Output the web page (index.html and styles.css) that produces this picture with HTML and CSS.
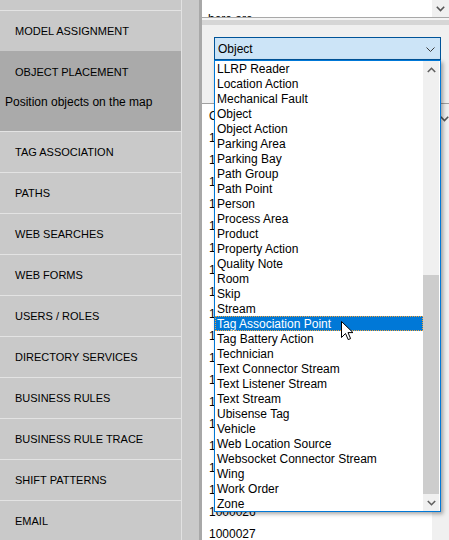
FILE: index.html
```html
<!DOCTYPE html>
<html>
<head>
<meta charset="utf-8">
<link rel="stylesheet" href="styles.css">
</head>
<body>
<div class="app">
  <nav class="sidebar">
    <div class="nav-list">
      <div class="nav-item">FLOOR PLANS</div>
      <div class="nav-item">MODEL ASSIGNMENT</div>
      <div class="nav-item active">
        <div class="nav-title">OBJECT PLACEMENT</div>
        <div class="nav-sub">Position objects on the map</div>
      </div>
      <div class="nav-item">TAG ASSOCIATION</div>
      <div class="nav-item">PATHS</div>
      <div class="nav-item">WEB SEARCHES</div>
      <div class="nav-item">WEB FORMS</div>
      <div class="nav-item">USERS / ROLES</div>
      <div class="nav-item">DIRECTORY SERVICES</div>
      <div class="nav-item">BUSINESS RULES</div>
      <div class="nav-item">BUSINESS RULE TRACE</div>
      <div class="nav-item">SHIFT PATTERNS</div>
      <div class="nav-item">EMAIL</div>
    </div>
  </nav>
  <div class="splitter"></div>
  <main class="main">
    <div class="topbox">
      <span class="topbox-text">here are</span>
      <div class="topbox-btn">
        <svg width="9" height="6" viewBox="0 0 9 6"><path d="M0.8 0.8 L4.5 4.5 L8.2 0.8" stroke="#555" stroke-width="1.6" fill="none"/></svg>
      </div>
    </div>
    <div class="gap"></div>
    <div class="band"></div>
    <div class="panel">
      <div class="combo">
        <div class="select">
          <span>Object</span>
          <svg width="9" height="5" viewBox="0 0 9 5"><path d="M0.5 0.5 L4.5 4.5 L8.5 0.5" stroke="#3c3c3c" stroke-width="1" fill="none"/></svg>
        </div>
        <div class="dropdown">
          <div class="options">
            <div class="opt">LLRP Reader</div>
            <div class="opt">Location Action</div>
            <div class="opt">Mechanical Fault</div>
            <div class="opt">Object</div>
            <div class="opt">Object Action</div>
            <div class="opt">Parking Area</div>
            <div class="opt">Parking Bay</div>
            <div class="opt">Path Group</div>
            <div class="opt">Path Point</div>
            <div class="opt">Person</div>
            <div class="opt">Process Area</div>
            <div class="opt">Product</div>
            <div class="opt">Property Action</div>
            <div class="opt">Quality Note</div>
            <div class="opt">Room</div>
            <div class="opt">Skip</div>
            <div class="opt">Stream</div>
            <div class="opt sel">Tag Association Point</div>
            <div class="opt">Tag Battery Action</div>
            <div class="opt">Technician</div>
            <div class="opt">Text Connector Stream</div>
            <div class="opt">Text Listener Stream</div>
            <div class="opt">Text Stream</div>
            <div class="opt">Ubisense Tag</div>
            <div class="opt">Vehicle</div>
            <div class="opt">Web Location Source</div>
            <div class="opt">Websocket Connector Stream</div>
            <div class="opt">Wing</div>
            <div class="opt">Work Order</div>
            <div class="opt">Zone</div>
          </div>
          <div class="vscroll">
            <div class="sb-btn"><svg width="9" height="6" viewBox="0 0 9 6"><path d="M0.8 5 L4.5 1.3 L8.2 5" stroke="#606060" stroke-width="1.6" fill="none"/></svg></div>
            <div class="sb-track"><div class="sb-thumb"></div></div>
            <div class="sb-btn"><svg width="9" height="6" viewBox="0 0 9 6"><path d="M0.8 1 L4.5 4.7 L8.2 1" stroke="#606060" stroke-width="1.6" fill="none"/></svg></div>
          </div>
        </div>
      </div>
    </div>
    <div class="grid">
      <div class="grid-rows">
        <div class="row">Object ID</div>
        <div class="row">1000009</div>
        <div class="row">1000010</div>
        <div class="row">1000011</div>
        <div class="row">1000012</div>
        <div class="row">1000013</div>
        <div class="row">1000014</div>
        <div class="row">1000015</div>
        <div class="row">1000016</div>
        <div class="row">1000017</div>
        <div class="row">1000018</div>
        <div class="row">1000019</div>
        <div class="row">1000020</div>
        <div class="row">1000021</div>
        <div class="row">1000022</div>
        <div class="row">1000023</div>
        <div class="row">1000024</div>
        <div class="row">1000025</div>
        <div class="row">1000026</div>
        <div class="row">1000027</div>
      </div>
      <div class="grid-scroll">
        <svg width="9" height="6" viewBox="0 0 9 6"><path d="M0.8 0.8 L4.5 4.5 L8.2 0.8" stroke="#555" stroke-width="1.6" fill="none"/></svg>
      </div>
    </div>
  </main>
</div>
<svg class="cursor" width="13" height="20" viewBox="0 0 13 20"><path d="M0.5 0.5 L0.5 16.5 L4.5 12.5 L7.2 18.6 L9.6 17.6 L7 11.6 L12 11.6 Z" fill="#fff" stroke="#000" stroke-width="1" stroke-linejoin="miter"/></svg>
</body>
</html>
```

FILE: styles.css
```css
html, body {
  margin: 0;
  padding: 0;
}
body {
  width: 449px;
  height: 540px;
  overflow: hidden;
  position: relative;
  background: #c9c9c9;
  font-family: "Liberation Sans", Arial, sans-serif;
  font-size: 12px;
  color: #000;
}
.app {
  display: flex;
  height: 540px;
}
.sidebar {
  width: 181px;
  flex: none;
  background: #c9c9c9;
  border-right: 1px solid #e2e2e2;
  overflow: hidden;
}
.nav-list {
  margin-top: -31px;
}
.nav-item {
  height: 41px;
  box-sizing: border-box;
  border-top: 1px solid #e3e3e3;
  padding: 0 0 1px 15px;
  display: flex;
  align-items: center;
  font-size: 11px;
  color: #000;
  white-space: nowrap;
}
.nav-item.active {
  display: block;
  height: 80px;
  padding: 0;
  background: #aaaaaa;
  border-top-color: #aaaaaa;
}
.nav-title {
  padding: 13px 0 0 15px;
  line-height: 14px;
  font-size: 11px;
}
.nav-sub {
  margin-top: 16px;
  padding-left: 5px;
  line-height: 15px;
  font-size: 12px;
}
.splitter {
  width: 17px;
  flex: none;
  background: #c9c9c9;
}
.main {
  flex: 1;
  min-width: 0;
  border-left: 3px solid #a8a8a8;
  background: #f0f0f0;
  display: flex;
  flex-direction: column;
}
.topbox {
  height: 17px;
  flex: none;
  background: #fff;
  border-bottom: 1px solid #a8a8a8;
  overflow: hidden;
  display: flex;
}
.topbox-text {
  flex: 1;
  padding: 12px 0 0 6px;
  line-height: 15px;
}
.topbox-btn {
  width: 17px;
  background: #f0f0f0;
  display: flex;
  align-items: center;
  justify-content: center;
}
.gap {
  height: 2px;
  flex: none;
  background: #f4f4f4;
}
.band {
  height: 5px;
  flex: none;
  background: #d6d6d6;
}
.panel {
  height: 78px;
  flex: none;
  box-sizing: border-box;
  padding: 12px 0 0 12px;
}
.combo {
  position: relative;
  width: 227px;
}
.select {
  height: 23px;
  box-sizing: border-box;
  border: 1px solid #005499;
  background: #cce4f7;
  display: flex;
  align-items: center;
  justify-content: space-between;
  padding: 1px 5px 0 3px;
}
.dropdown {
  position: absolute;
  top: 23px;
  left: 0;
  width: 227px;
  height: 452px;
  box-sizing: border-box;
  border: 1px solid #0078d7;
  background: #fff;
  display: flex;
  box-shadow: 2px 2px 4px rgba(0, 0, 0, 0.35);
  z-index: 2;
}
.options {
  width: 208px;
  flex: none;
}
.opt {
  height: 15px;
  line-height: 17px;
  padding-left: 2px;
  white-space: nowrap;
}
.opt.sel {
  background: #0078d7;
  color: #fff;
  outline: 1px dotted #f3a33a;
  outline-offset: -1px;
}
.vscroll {
  width: 16px;
  margin-right: 1px;
  flex: none;
  background: #f0f0f0;
  display: flex;
  flex-direction: column;
}
.sb-btn {
  height: 17px;
  flex: none;
  display: flex;
  align-items: center;
  justify-content: center;
}
.sb-track {
  flex: 1;
  display: flex;
  flex-direction: column;
  justify-content: flex-end;
}
.sb-thumb {
  height: 219px;
  background: #cdcdcd;
}
.grid {
  flex: 1;
  min-height: 0;
  overflow: hidden;
  display: flex;
  background: #fff;
  border-top: 1px solid #a0a0a0;
}
.grid-rows {
  flex: 1;
  padding: 1px 0 0 7px;
}
.row {
  height: 22px;
  line-height: 22px;
  white-space: nowrap;
}
.grid-scroll {
  width: 17px;
  flex: none;
  background: #f0f0f0;
  padding: 7px 0 0 8px;
  box-sizing: border-box;
}
.cursor {
  position: absolute;
  left: 341px;
  top: 321px;
  z-index: 5;
}
```
